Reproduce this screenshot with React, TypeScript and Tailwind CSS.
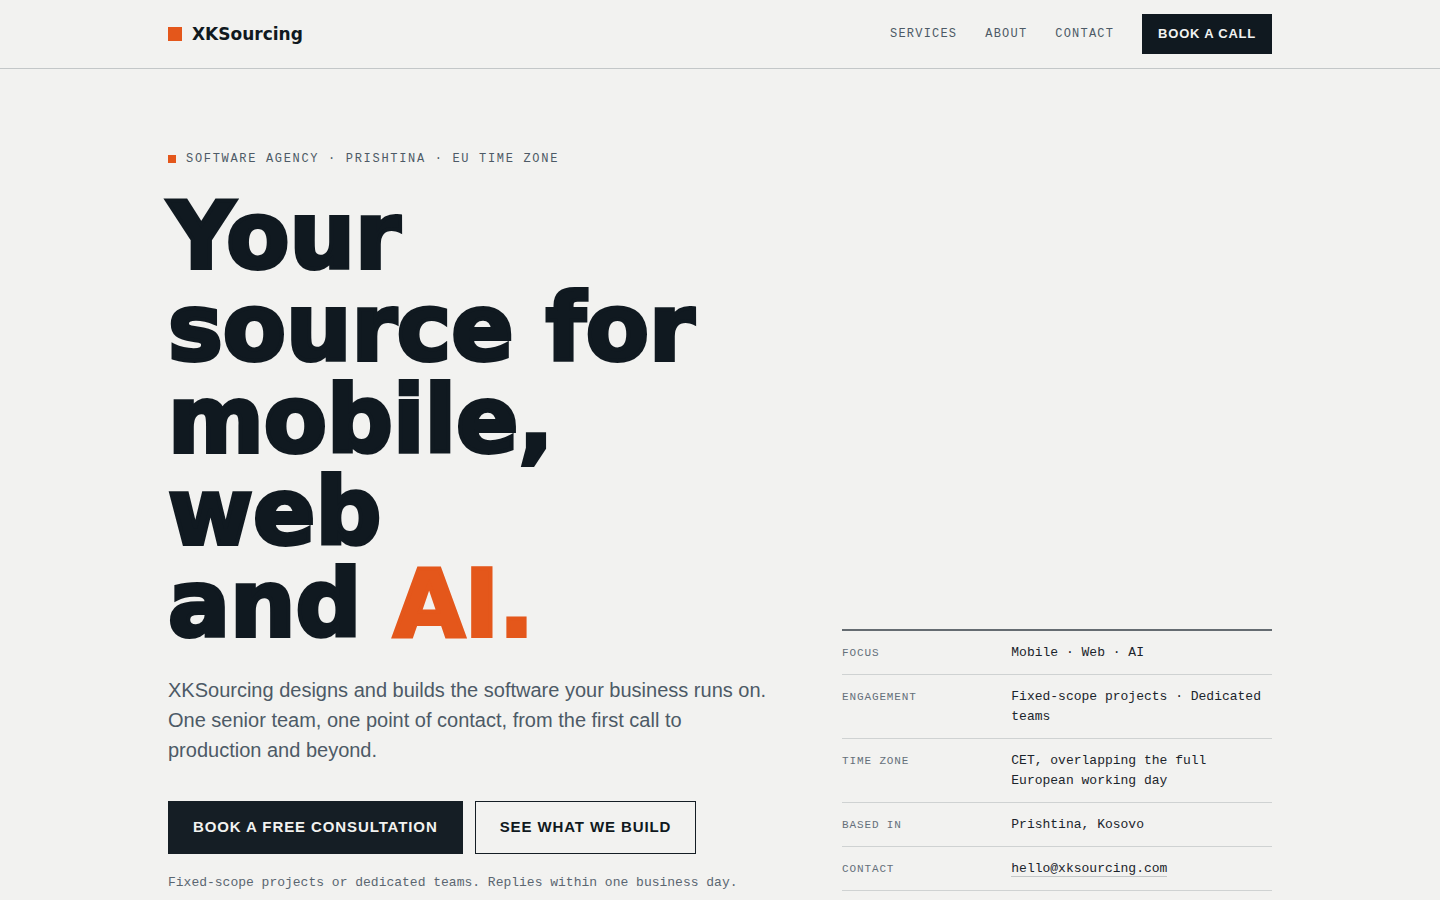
const navLinks = [
  { label: "Services", href: "#services" },
  { label: "About", href: "#about" },
  { label: "Contact", href: "#contact" },
];

const facts = [
  { label: "Focus", value: "Mobile · Web · AI" },
  { label: "Engagement", value: "Fixed-scope projects · Dedicated teams" },
  { label: "Time zone", value: "CET, overlapping the full European working day" },
  { label: "Based in", value: "Prishtina, Kosovo" },
  { label: "Contact", value: "hello@xksourcing.com", href: "mailto:hello@xksourcing.com" },
];

function Header() {
  return (
    <header className="border-b border-[#c3c7c8]">
      <div className="mx-auto flex h-[68px] max-w-[1200px] items-center justify-between px-12">
        <a
          href="#top"
          className="flex items-center gap-[10px] font-['DejaVu_Sans',sans-serif] text-[17px] leading-6 font-bold"
        >
          <span className="size-[14px] bg-[#e4571b]" />
          XKSourcing
        </a>
        <nav className="flex items-center gap-7">
          {navLinks.map((link) => (
            <a
              key={link.label}
              href={link.href}
              className="font-['Liberation_Mono',monospace] text-[12px] leading-5 tracking-[0.1em] text-[#4d5a66] uppercase"
            >
              {link.label}
            </a>
          ))}
          <a
            href="#book"
            className="flex h-10 items-center bg-[#101920] px-4 font-['Liberation_Sans',sans-serif] text-[13px] font-bold tracking-[0.06em] text-[#f2f2f0] uppercase"
          >
            Book a call
          </a>
        </nav>
      </div>
    </header>
  );
}

function FactSheet() {
  return (
    <dl className="border-t-2 border-[#656c71] font-['Liberation_Mono',monospace]">
      {facts.map((fact) => (
        <div
          key={fact.label}
          className="grid grid-cols-[1fr_1.7fr] gap-4 border-b border-[#cfd2d2] pt-3 pb-[11px] leading-5"
        >
          <dt className="text-[11px] tracking-[0.08em] text-[#65707a] uppercase">{fact.label}</dt>
          <dd className="text-[13px] text-[#1b242b]">
            {fact.href ? (
              <a href={fact.href} className="border-b border-[#c3c7c8]">
                {fact.value}
              </a>
            ) : (
              fact.value
            )}
          </dd>
        </div>
      ))}
    </dl>
  );
}

function Hero() {
  return (
    <section className="mx-auto grid max-w-[1200px] grid-cols-[1.4fr_1fr] items-end gap-[72px] px-12 pt-20 pb-24">
      <div>
        <p className="flex items-center gap-[10px] font-['Liberation_Mono',monospace] text-[12px] leading-5 tracking-[0.14em] text-[#4d5a66] uppercase">
          <span className="size-2 bg-[#e4571b]" />
          Software agency · Prishtina · EU time zone
        </p>
        <h1 className="mt-[22px] font-['DejaVu_Sans',sans-serif] text-[92px] leading-[92px] font-bold whitespace-nowrap [-webkit-text-stroke:4px_currentColor]">
          Your
          <br />
          source for
          <br />
          mobile,
          <br />
          web
          <br />
          and <span className="text-[#e4571b]">AI.</span>
        </h1>
        <p className="mt-6 font-['Liberation_Sans',sans-serif] text-[20px] leading-[30px] text-[#4d5a66]">
          XKSourcing designs and builds the software your business runs on. One senior team, one
          point of contact, from the first call to production and beyond.
        </p>
        <div className="mt-9 flex gap-3 font-['Liberation_Sans',sans-serif] text-[15px] font-bold tracking-[0.06em] whitespace-nowrap uppercase">
          <a
            href="#book"
            className="flex h-[53px] items-center border border-[#151e25] bg-[#151e25] px-6 text-[#f2f2f0]"
          >
            Book a free consultation
          </a>
          <a href="#services" className="flex h-[53px] items-center border border-[#151e25] px-6">
            See what we build
          </a>
        </div>
        <p className="mt-[21px] font-['Liberation_Mono',monospace] text-[13px] leading-4 text-[#5a6671]">
          Fixed-scope projects or dedicated teams. Replies within one business day.
        </p>
      </div>
      <FactSheet />
    </section>
  );
}

export default function App() {
  return (
    <div id="top" className="min-h-screen bg-[#f2f2f0] text-[#101920] antialiased">
      <Header />
      <main>
        <Hero />
      </main>
    </div>
  );
}
